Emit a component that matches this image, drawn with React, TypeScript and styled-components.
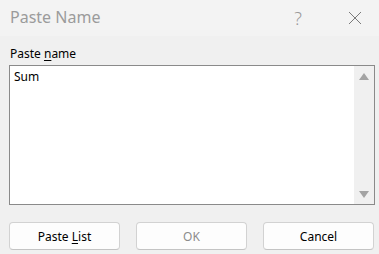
import React from "react";
import styled, { createGlobalStyle } from "styled-components";

const Global = createGlobalStyle`
  html, body { margin: 0; padding: 0; background: #f0f0f0; }
  body { font-family: "Segoe UI", "Noto Sans", "Open Sans", sans-serif; }
`;

const Dialog = styled.div`
  width: 379px;
  height: 254px;
  background: #f0f0f0;
  display: flex;
  flex-direction: column;
  overflow: hidden;
`;

const TitleBar = styled.div`
  height: 36px;
  background: #f3f3f3;
  display: flex;
  align-items: center;
  padding-left: 10px;
  box-sizing: border-box;
`;

const Title = styled.div`
  flex: 1;
  font-size: 16px;
  color: #9b9b9b;
  margin-top: -2px;
`;

const TitleButton = styled.div<{ $w: number }>`
  width: ${(p) => p.$w}px;
  height: 36px;
  display: flex;
  align-items: center;
  justify-content: center;
  color: #9a9a9a;
  font-size: 18px;
  font-weight: 300;
`;

const Body = styled.div`
  flex: 1;
  display: flex;
  flex-direction: column;
  padding: 10px 4px 0 9px;
`;

const Label = styled.div`
  font-size: 12px;
  line-height: 16px;
  color: #000;
  padding-left: 1px;
  margin-bottom: 3px;
  u { text-decoration-thickness: 1px; text-underline-offset: 2px; }
`;

const ListBox = styled.div`
  height: 140px;
  border: 1px solid #8a8a8a;
  background: #fff;
  display: flex;
  box-sizing: border-box;
`;

const ListItems = styled.div`
  flex: 1;
  padding: 3px 4px;
  font-size: 12px;
  line-height: 16px;
  color: #000;
`;

const ScrollBar = styled.div`
  width: 20px;
  background: #f0f0f0;
  display: flex;
  flex-direction: column;
  justify-content: space-between;
  align-items: center;
  padding: 7px 0 6px;
`;

const Arrow = styled.svg`
  display: block;
`;

const ButtonRow = styled.div`
  display: grid;
  grid-template-columns: 111px 111px 111px;
  column-gap: 16px;
  margin-top: 17px;
`;

const Button = styled.div<{ $disabled?: boolean }>`
  height: 28px;
  background: #fdfdfd;
  border: 1px solid #d2d2d2;
  border-bottom-color: #c4c4c4;
  border-radius: 4px;
  box-sizing: border-box;
  display: flex;
  align-items: center;
  justify-content: center;
  font-size: 12px;
  color: ${(p) => (p.$disabled ? "#8c8c8c" : "#000")};
  u { text-decoration-thickness: 1px; text-underline-offset: 2px; }
`;

export default function App() {
  return (
    <>
      <Global />
      <Dialog>
        <TitleBar>
          <Title>Paste Name</Title>
          <TitleButton $w={66}>?</TitleButton>
          <TitleButton $w={48}>
            <svg width="14" height="14" viewBox="0 0 14 14">
              <path d="M1 1 L13 13 M13 1 L1 13" stroke="#7a7a7a" strokeWidth="1" fill="none" />
            </svg>
          </TitleButton>
        </TitleBar>
        <Body>
          <Label>
            Paste <u>n</u>ame
          </Label>
          <ListBox>
            <ListItems>Sum</ListItems>
            <ScrollBar>
              <Arrow width="10" height="7" viewBox="0 0 10 7">
                <path d="M5 0 L10 7 L0 7 Z" fill="#a3a3a3" />
              </Arrow>
              <Arrow width="10" height="7" viewBox="0 0 10 7">
                <path d="M0 0 L10 0 L5 7 Z" fill="#a3a3a3" />
              </Arrow>
            </ScrollBar>
          </ListBox>
          <ButtonRow>
            <Button>
              <span>
                Paste <u>L</u>ist
              </span>
            </Button>
            <Button $disabled>OK</Button>
            <Button>Cancel</Button>
          </ButtonRow>
        </Body>
      </Dialog>
    </>
  );
}
